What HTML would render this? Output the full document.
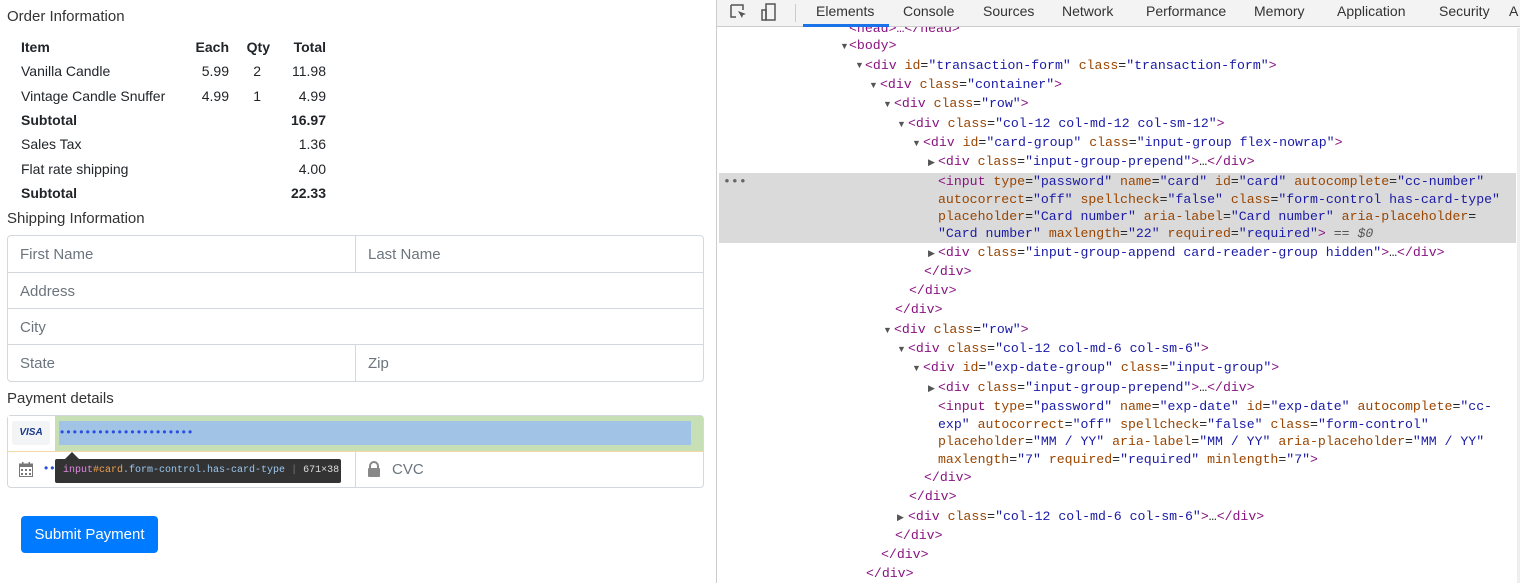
<!DOCTYPE html>
<html><head><meta charset="utf-8"><style>
*{margin:0;padding:0;box-sizing:border-box}
body{width:1520px;height:583px;overflow:hidden;background:#fff;font-family:"Liberation Sans",sans-serif;color:#212529;position:relative}
.a{position:absolute;white-space:nowrap}
.h{font-size:15px;color:#333}
td{font-size:14px;padding:0;height:24.3px;white-space:nowrap}
.r{text-align:right}
.b{font-weight:bold}
.box{position:absolute;border:1px solid #d3d8de;background:#fff}
.ph{position:absolute;font-size:15px;color:#6c757d}
.dt{position:absolute;left:716px;top:0;width:804px;height:583px;border-left:1px solid #ccc}
.tabs{position:absolute;left:0;top:0;width:804px;height:27px;background:#f3f3f3;border-bottom:1px solid #ccc}
.tab{position:absolute;top:3px;font-size:14px;color:#333}
.c{position:absolute;font-family:"Liberation Mono",monospace;font-size:13.2px;white-space:nowrap;color:#881280;line-height:19px}
.c i{font-style:normal;color:#994500}
.c u{text-decoration:none;color:#1a1aa6}
.c s{text-decoration:none;color:#222}
.tri{position:absolute;font-size:9px;color:#555}
</style></head><body>

<div class="a h" style="left:7px;top:8px">Order Information</div>
<table class="a" style="left:21px;top:35px;border-collapse:collapse">
<tr class="b"><td style="width:168px">Item</td><td class="r" style="width:40px">Each</td><td class="r" style="width:41px">Qty</td><td class="r" style="width:56px">Total</td></tr>
<tr><td>Vanilla Candle</td><td class="r">5.99</td><td class="r" style="padding-right:9px">2</td><td class="r">11.98</td></tr>
<tr><td>Vintage Candle Snuffer</td><td class="r">4.99</td><td class="r" style="padding-right:9px">1</td><td class="r">4.99</td></tr>
<tr class="b"><td>Subtotal</td><td></td><td></td><td class="r">16.97</td></tr>
<tr><td>Sales Tax</td><td></td><td></td><td class="r">1.36</td></tr>
<tr><td>Flat rate shipping</td><td></td><td></td><td class="r">4.00</td></tr>
<tr class="b"><td>Subtotal</td><td></td><td></td><td class="r">22.33</td></tr>
</table>
<div class="a h" style="left:7px;top:210px">Shipping Information</div>

<div class="box" style="left:7px;top:235px;width:697px;height:147px;border-radius:4px"></div>
<div class="a" style="left:355px;top:236px;width:1px;height:36px;background:#d3d8de"></div>
<div class="a" style="left:8px;top:272px;width:695px;height:1px;background:#d3d8de"></div>
<div class="a" style="left:8px;top:308px;width:695px;height:1px;background:#d3d8de"></div>
<div class="a" style="left:8px;top:344px;width:695px;height:1px;background:#d3d8de"></div>
<div class="a" style="left:355px;top:345px;width:1px;height:36px;background:#d3d8de"></div>
<div class="ph" style="left:20px;top:246px">First Name</div>
<div class="ph" style="left:368px;top:246px">Last Name</div>
<div class="ph" style="left:20px;top:283px">Address</div>
<div class="ph" style="left:20px;top:319px">City</div>
<div class="ph" style="left:20px;top:355px">State</div>
<div class="ph" style="left:368px;top:355px">Zip</div>

<div class="a h" style="left:7px;top:390px">Payment details</div>
<div class="box" style="left:7px;top:415px;width:697px;height:73px;border-radius:4px"></div>
<div class="a" style="left:55px;top:416px;width:648px;height:35px;background:#c6dfb4"></div>
<div class="a" style="left:59px;top:421px;width:632px;height:24px;background:#a1c3e6"></div>
<div class="a" style="left:60px;top:425px;font-size:12px;color:#2a4ee0;letter-spacing:2.2px">•••••••••••••••••••••</div>
<div class="a" style="left:8px;top:416px;width:47px;height:35px;background:#fff"></div>
<div class="a" style="left:12px;top:421px;width:38px;height:24px;background:#f2f4f6;border-radius:3px;font-size:10px;font-weight:bold;font-style:italic;color:#1a3a8a;text-align:center;line-height:24px">VISA</div>
<div class="a" style="left:8px;top:451px;width:695px;height:1px;background:#f2d9a8"></div>
<div class="a" style="left:355px;top:452px;width:1px;height:35px;background:#d3d8de"></div>
<svg class="a" style="left:19px;top:462px" width="14" height="15" viewBox="0 0 14 15"><rect x="0.5" y="2" width="13" height="12.5" fill="none" stroke="#777"/><rect x="0.5" y="2" width="13" height="3" fill="#777"/><g fill="#777"><rect x="2" y="7" width="2" height="2"/><rect x="6" y="7" width="2" height="2"/><rect x="10" y="7" width="2" height="2"/><rect x="2" y="11" width="2" height="2"/><rect x="6" y="11" width="2" height="2"/><rect x="10" y="11" width="2" height="2"/></g><rect x="3" y="0" width="1.5" height="3" fill="#777"/><rect x="9.5" y="0" width="1.5" height="3" fill="#777"/></svg>
<div class="a" style="left:44px;top:461px;font-size:12px;color:#2a4ee0;letter-spacing:2px">••</div>
<svg class="a" style="left:367px;top:461px" width="14" height="16" viewBox="0 0 14 16"><path d="M3 7V5a4 4 0 0 1 8 0v2" fill="none" stroke="#888" stroke-width="2"/><rect x="1" y="7" width="12" height="9" rx="1" fill="#888"/></svg>
<div class="ph" style="left:392px;top:461px">CVC</div>
<div class="a" style="left:55px;top:459px;width:286px;height:24px;background:#333;border-radius:2px;font-family:'Liberation Mono',monospace;font-size:10px;line-height:24px;padding-left:8px;color:#9ac8f0"><span style="color:#e08ae0">input</span><span style="color:#f0a050">#card</span>.form-control.has-card-type <span style="color:#777">|</span> <span style="color:#ddd">671×38</span></div>
<div class="a" style="left:65px;top:452px;width:0;height:0;border-left:7px solid transparent;border-right:7px solid transparent;border-bottom:7px solid #333"></div>

<div class="a" style="left:21px;top:516px;width:137px;height:37px;background:#007bff;border-radius:4px;color:#fff;font-size:15px;text-align:center;line-height:37px">Submit Payment</div>

<div class="c" style="left:849px;top:19px">&lt;head&gt;…&lt;/head&gt;</div>

<div class="dt">
<div class="tabs">
<svg style="position:absolute;left:13px;top:4px" width="18" height="16"><path d="M1 1h12v5M1 1v12h5" fill="none" stroke="#555" stroke-width="1.5"/><path d="M8 7l8 3-3 1-1 3z" fill="#555"/></svg>
<svg style="position:absolute;left:44px;top:3px" width="16" height="18"><rect x="5" y="1" width="9" height="16" fill="none" stroke="#555" stroke-width="1.5"/><rect x="1" y="7" width="4" height="10" fill="none" stroke="#555" stroke-width="1.5"/></svg>
<div style="position:absolute;left:78px;top:4px;width:1px;height:18px;background:#ccc"></div>
<div class="tab" style="left:99px">Elements</div>
<div style="position:absolute;left:86px;top:24px;width:86px;height:3px;background:#1a73e8"></div>
<div class="tab" style="left:186px">Console</div>
<div class="tab" style="left:266px">Sources</div>
<div class="tab" style="left:345px">Network</div>
<div class="tab" style="left:429px">Performance</div>
<div class="tab" style="left:537px">Memory</div>
<div class="tab" style="left:620px">Application</div>
<div class="tab" style="left:722px">Security</div>
<div class="tab" style="left:792px">A</div>
</div>
<div style="position:absolute;left:800px;top:28px;width:4px;height:555px;background:#eee"></div>
<div style="position:absolute;left:2px;top:173px;width:797px;height:70px;background:#dadada"></div>
<div class="c" style="left:6px;top:172px;color:#666">•••</div>
</div>

<div class="tri" style="left:840px;top:41px">▼</div><div class="c" style="left:849px;top:36px">&lt;body&gt;</div>
<div class="tri" style="left:855px;top:60px">▼</div><div class="c" style="left:865px;top:56px">&lt;div <i>id</i><s>=</s><u>"transaction-form"</u> <i>class</i><s>=</s><u>"transaction-form"</u>&gt;</div>
<div class="tri" style="left:869px;top:80px">▼</div><div class="c" style="left:880px;top:75px">&lt;div <i>class</i><s>=</s><u>"container"</u>&gt;</div>
<div class="tri" style="left:883px;top:99px">▼</div><div class="c" style="left:894px;top:94px">&lt;div <i>class</i><s>=</s><u>"row"</u>&gt;</div>
<div class="tri" style="left:897px;top:119px">▼</div><div class="c" style="left:908px;top:114px">&lt;div <i>class</i><s>=</s><u>"col-12 col-md-12 col-sm-12"</u>&gt;</div>
<div class="tri" style="left:912px;top:138px">▼</div><div class="c" style="left:923px;top:133px">&lt;div <i>id</i><s>=</s><u>"card-group"</u> <i>class</i><s>=</s><u>"input-group flex-nowrap"</u>&gt;</div>
<div class="tri" style="left:928px;top:157px">▶</div><div class="c" style="left:938px;top:152px">&lt;div <i>class</i><s>=</s><u>"input-group-prepend"</u>&gt;<s>…</s>&lt;/div&gt;</div>
<div class="c" style="left:938px;top:172px">&lt;input <i>type</i><s>=</s><u>"password"</u> <i>name</i><s>=</s><u>"card"</u> <i>id</i><s>=</s><u>"card"</u> <i>autocomplete</i><s>=</s><u>"cc-number"</u></div>
<div class="c" style="left:938px;top:190px"><i>autocorrect</i><s>=</s><u>"off"</u> <i>spellcheck</i><s>=</s><u>"false"</u> <i>class</i><s>=</s><u>"form-control has-card-type"</u></div>
<div class="c" style="left:938px;top:207px"><i>placeholder</i><s>=</s><u>"Card number"</u> <i>aria-label</i><s>=</s><u>"Card number"</u> <i>aria-placeholder</i><s>=</s></div>
<div class="c" style="left:938px;top:224px"><u>"Card number"</u> <i>maxlength</i><s>=</s><u>"22"</u> <i>required</i><s>=</s><u>"required"</u>&gt; <s style="color:#555">== <em>$0</em></s></div>
<div class="tri" style="left:928px;top:248px">▶</div><div class="c" style="left:938px;top:243px">&lt;div <i>class</i><s>=</s><u>"input-group-append card-reader-group hidden"</u>&gt;<s>…</s>&lt;/div&gt;</div>
<div class="c" style="left:924px;top:262px">&lt;/div&gt;</div>
<div class="c" style="left:909px;top:281px">&lt;/div&gt;</div>
<div class="c" style="left:895px;top:300px">&lt;/div&gt;</div>
<div class="tri" style="left:883px;top:325px">▼</div><div class="c" style="left:894px;top:320px">&lt;div <i>class</i><s>=</s><u>"row"</u>&gt;</div>
<div class="tri" style="left:897px;top:344px">▼</div><div class="c" style="left:908px;top:339px">&lt;div <i>class</i><s>=</s><u>"col-12 col-md-6 col-sm-6"</u>&gt;</div>
<div class="tri" style="left:912px;top:363px">▼</div><div class="c" style="left:923px;top:358px">&lt;div <i>id</i><s>=</s><u>"exp-date-group"</u> <i>class</i><s>=</s><u>"input-group"</u>&gt;</div>
<div class="tri" style="left:928px;top:383px">▶</div><div class="c" style="left:938px;top:378px">&lt;div <i>class</i><s>=</s><u>"input-group-prepend"</u>&gt;<s>…</s>&lt;/div&gt;</div>
<div class="c" style="left:938px;top:397px">&lt;input <i>type</i><s>=</s><u>"password"</u> <i>name</i><s>=</s><u>"exp-date"</u> <i>id</i><s>=</s><u>"exp-date"</u> <i>autocomplete</i><s>=</s><u>"cc-</u></div>
<div class="c" style="left:938px;top:415px"><u>exp"</u> <i>autocorrect</i><s>=</s><u>"off"</u> <i>spellcheck</i><s>=</s><u>"false"</u> <i>class</i><s>=</s><u>"form-control"</u></div>
<div class="c" style="left:938px;top:432px"><i>placeholder</i><s>=</s><u>"MM / YY"</u> <i>aria-label</i><s>=</s><u>"MM / YY"</u> <i>aria-placeholder</i><s>=</s><u>"MM / YY"</u></div>
<div class="c" style="left:938px;top:450px"><i>maxlength</i><s>=</s><u>"7"</u> <i>required</i><s>=</s><u>"required"</u> <i>minlength</i><s>=</s><u>"7"</u>&gt;</div>
<div class="c" style="left:924px;top:468px">&lt;/div&gt;</div>
<div class="c" style="left:909px;top:487px">&lt;/div&gt;</div>
<div class="tri" style="left:897px;top:512px">▶</div><div class="c" style="left:908px;top:507px">&lt;div <i>class</i><s>=</s><u>"col-12 col-md-6 col-sm-6"</u>&gt;<s>…</s>&lt;/div&gt;</div>
<div class="c" style="left:895px;top:526px">&lt;/div&gt;</div>
<div class="c" style="left:881px;top:545px">&lt;/div&gt;</div>
<div class="c" style="left:866px;top:564px">&lt;/div&gt;</div>
</body></html>
